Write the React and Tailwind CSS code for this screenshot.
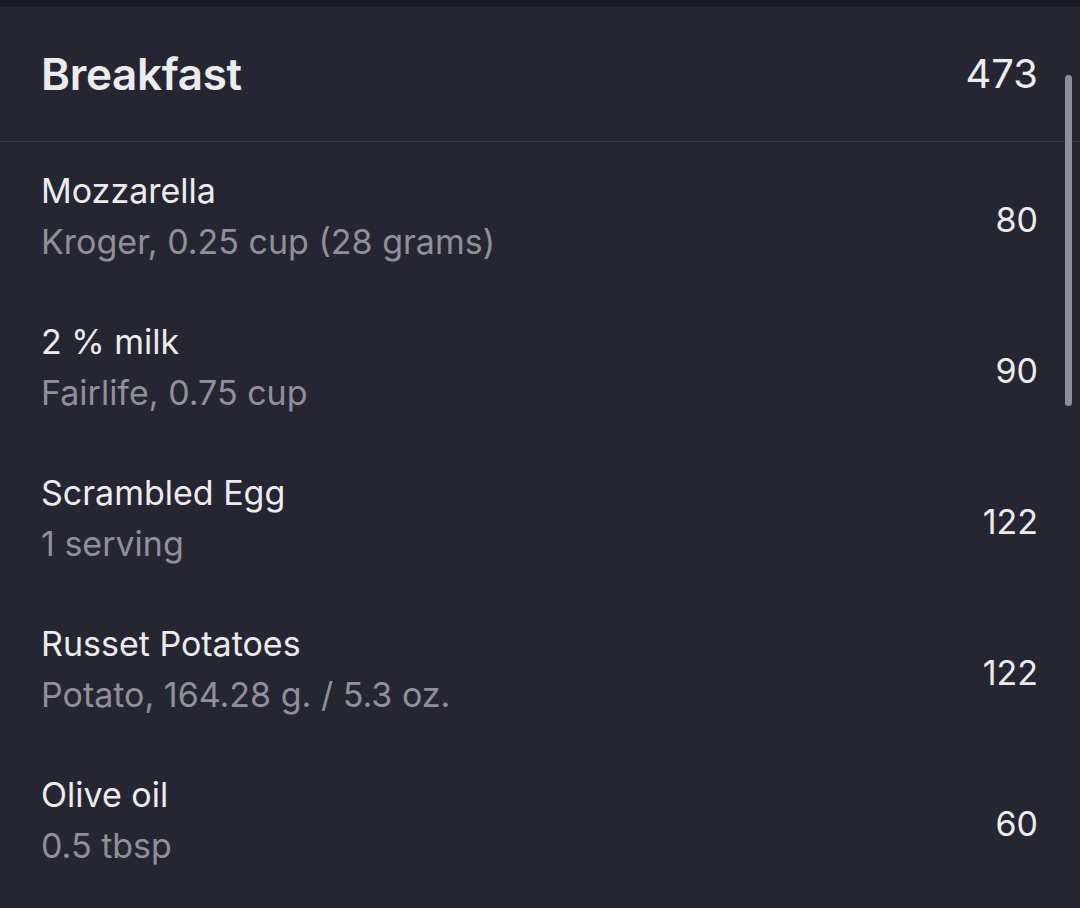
import React from "react";

const items = [
  { name: "Mozzarella", detail: "Kroger, 0.25 cup (28 grams)", cals: 80 },
  { name: "2 % milk", detail: "Fairlife, 0.75 cup", cals: 90 },
  { name: "Scrambled Egg", detail: "1 serving", cals: 122 },
  { name: "Russet Potatoes", detail: "Potato, 164.28 g. / 5.3 oz.", cals: 122 },
  { name: "Olive oil", detail: "0.5 tbsp", cals: 60 },
];

const FoodRow = ({ name, detail, cals }) => (
  <div className="flex h-[151px] items-center justify-between pl-[41px] pr-[42px]">
    <div className="flex flex-col pb-[4px]">
      <p className="text-[34px] leading-[51px] text-[#ececef]">{name}</p>
      <p className="text-[34px] leading-[51px] text-[#8f909a]">{detail}</p>
    </div>
    <p className="pt-[3px] text-[34px] text-[#ececef]">{cals}</p>
  </div>
);

export default function App() {
  return (
    <div
      className="relative h-[908px] w-[1080px] overflow-hidden bg-[#252632]"
      style={{ fontFamily: "Inter, 'Noto Sans', sans-serif" }}
    >
      <div className="h-[7px] bg-[#171925]" />
      <div className="flex h-[135px] items-center justify-between border-b border-[#363844] pl-[41px] pr-[42px]">
        <h1 className="text-[44px] font-semibold tracking-[-0.3px] text-[#ececef]">Breakfast</h1>
        <span className="text-[40px] text-[#ececef]">473</span>
      </div>
      {items.map((item) => (
        <FoodRow key={item.name} {...item} />
      ))}
      <div className="absolute left-[1065px] top-[75px] h-[331px] w-[7px] rounded-full bg-[#8c8d95]" />
    </div>
  );
}
